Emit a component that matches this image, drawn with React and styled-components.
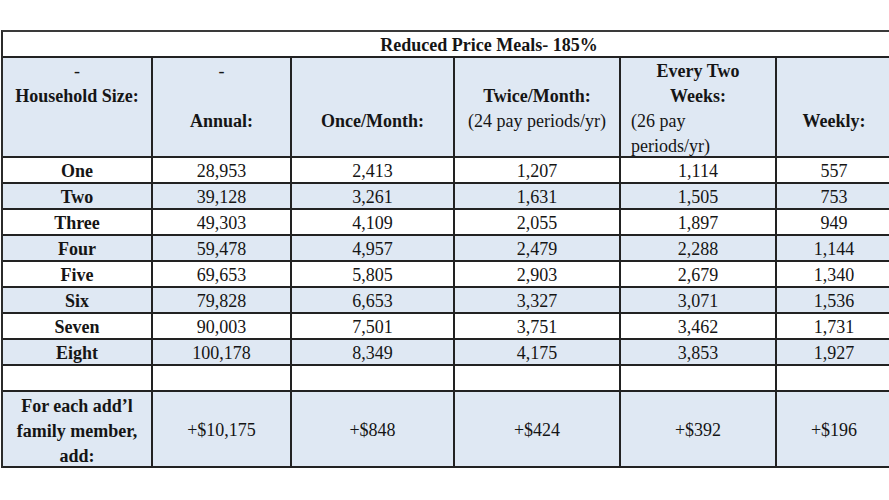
import React, { useEffect, useState } from "react";
import styled, { createGlobalStyle } from "styled-components";

const Global = createGlobalStyle`
  html, body { margin: 0; padding: 0; background: #ffffff; overflow: hidden; }
  body { width: 889px; height: 500px; font-family: "Liberation Serif", serif; }
`;

const Page = styled.div`
  padding: 30px 0 0 1px;
  width: 889px;
  height: 500px;
  box-sizing: border-box;
  overflow: hidden;
  font-family: "Liberation Serif", serif;
`;

const Grid = styled.div`
  display: grid;
  grid-template-columns: 150px 139px 163px 166px 156px 116px;
  grid-template-rows: 26px 100px repeat(9, 26px) 76px;
  width: 892px;
  border-left: 2px solid #2b2b2b;
  border-top: 2px solid #3a3a3a;
  font-family: "Liberation Serif", serif;
  font-size: 18px;
  color: #151515;
`;

const Cell = styled.div`
  box-sizing: border-box;
  border-right: 2px solid #222222;
  border-bottom: 2px solid #222222;
  background: ${(p) => (p.$shade ? "#dfe8f3" : "#ffffff")};
  display: flex;
  align-items: center;
  justify-content: center;
  text-align: center;
  font-family: "Liberation Serif", serif;
  font-weight: ${(p) => (p.$bold ? 700 : 400)};
  line-height: 24px;
  padding-top: 1px;
  white-space: nowrap;
`;

const TitleCell = styled(Cell)`
  grid-column: 1 / -1;
  padding-left: 84px;
  font-weight: 700;
`;

const HeadCell = styled(Cell)`
  display: block;
  padding-top: 1px;
  line-height: 25px;
`;

const Line = styled.div`
  height: 25px;
  font-weight: ${(p) => (p.$bold ? 700 : 400)};
  text-align: ${(p) => (p.$left ? "left" : "center")};
  padding-left: ${(p) => (p.$left ? "10px" : "0")};
`;

const MultiCell = styled(Cell)`
  flex-direction: column;
  padding-top: 4px;
  line-height: 25px;
`;

const rows = [
  ["One", "28,953", "2,413", "1,207", "1,114", "557"],
  ["Two", "39,128", "3,261", "1,631", "1,505", "753"],
  ["Three", "49,303", "4,109", "2,055", "1,897", "949"],
  ["Four", "59,478", "4,957", "2,479", "2,288", "1,144"],
  ["Five", "69,653", "5,805", "2,903", "2,679", "1,340"],
  ["Six", "79,828", "6,653", "3,327", "3,071", "1,536"],
  ["Seven", "90,003", "7,501", "3,751", "3,462", "1,731"],
  ["Eight", "100,178", "8,349", "4,175", "3,853", "1,927"],
];

const headers = [
  [{ t: "-" }, { t: "Household Size:", b: true }],
  [{ t: "-" }, { t: "\u00a0" }, { t: "Annual:", b: true }],
  [{ t: "\u00a0" }, { t: "\u00a0" }, { t: "Once/Month:", b: true }],
  [{ t: "\u00a0" }, { t: "Twice/Month:", b: true }, { t: "(24 pay periods/yr)" }],
  [
    { t: "Every Two", b: true },
    { t: "Weeks:", b: true },
    { t: "(26 pay", l: true },
    { t: "periods/yr)", l: true },
  ],
  [{ t: "\u00a0" }, { t: "\u00a0" }, { t: "Weekly:", b: true }],
];

const extra = ["+$10,175", "+$848", "+$424", "+$392", "+$196"];

export default function App() {
  const [pass, setPass] = useState(0);
  useEffect(() => {
    const t = setTimeout(() => setPass(1), 60);
    return () => clearTimeout(t);
  }, []);
  return (
    <>
      <Global />
      <Page>
        <Grid key={pass}>
          <TitleCell>Reduced Price Meals- 185%</TitleCell>
          {headers.map((lines, i) => (
            <HeadCell key={"h" + i} $shade>
              {lines.map((ln, j) => (
                <Line key={j} $bold={ln.b} $left={ln.l}>
                  {ln.t}
                </Line>
              ))}
            </HeadCell>
          ))}
          {rows.map((r, i) =>
            r.map((v, j) => (
              <Cell key={i + "-" + j} $shade={i % 2 === 1} $bold={j === 0}>
                {v}
              </Cell>
            ))
          )}
          {[0, 1, 2, 3, 4, 5].map((j) => (
            <Cell key={"e" + j} />
          ))}
          <MultiCell $shade $bold>
            <div>For each add’l</div>
            <div>family member,</div>
            <div>add:</div>
          </MultiCell>
          {extra.map((v, j) => (
            <Cell key={"x" + j} $shade>
              {v}
            </Cell>
          ))}
        </Grid>
      </Page>
    </>
  );
}
